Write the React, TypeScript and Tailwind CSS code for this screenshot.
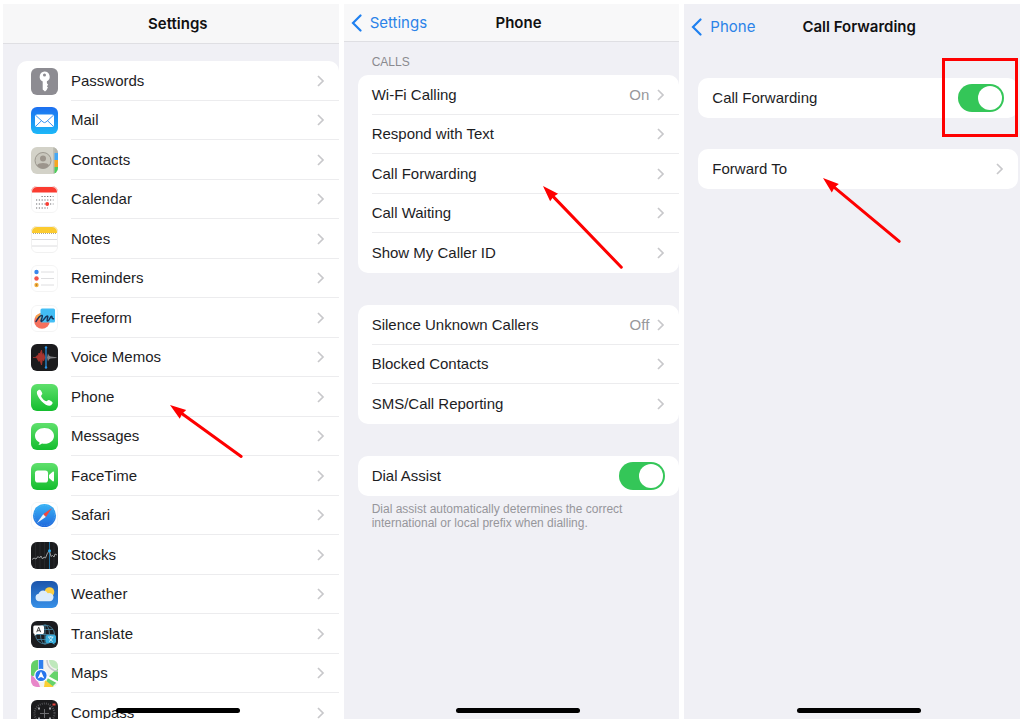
import { useId, useState } from "react";
import type { ReactNode } from "react";

// App icons, all drawn on a 27x27 grid

const Tile = ({ fill, stroke, children }: { fill: string; stroke?: string; children?: ReactNode }) => {
  const clip = useId();
  return (
    <svg viewBox="0 0 27 27" className="size-[27px] shrink-0" aria-hidden="true">
      <defs>
        <clipPath id={clip}>
          <rect width="27" height="27" rx="6" />
        </clipPath>
        <linearGradient id="green" x1="0" y1="0" x2="0" y2="1">
          <stop offset="0" stopColor="#5fe06c" />
          <stop offset="1" stopColor="#14bd2e" />
        </linearGradient>
        <linearGradient id="mail" x1="0" y1="0" x2="0" y2="1">
          <stop offset="0" stopColor="#1d6ff0" />
          <stop offset="1" stopColor="#1cb8f8" />
        </linearGradient>
        <linearGradient id="sky" x1="0" y1="0" x2="0" y2="1">
          <stop offset="0" stopColor="#1c55ab" />
          <stop offset="1" stopColor="#3790e8" />
        </linearGradient>
        <linearGradient id="safari" x1="0" y1="0" x2="0" y2="1">
          <stop offset="0" stopColor="#38b4f6" />
          <stop offset="1" stopColor="#2068dc" />
        </linearGradient>
      </defs>
      <g clipPath={`url(#${clip})`}>
        <rect width="27" height="27" fill={fill} />
        {children}
      </g>
      {stroke && <rect x="0.5" y="0.5" width="26" height="26" rx="5.5" fill="none" stroke={stroke} />}
    </svg>
  );
};

const PasswordsIcon = () => (
  <Tile fill="#8d8c92">
    <path
      fillRule="evenodd"
      fill="#fff"
      d="M13.5 3.5a5.2 5.2 0 0 1 2.4 9.8v2l1.2 1.400-1.200 1.600 1.100 1.400-1.100 1.300v.7l-1.900 1.700-2.300-1.800v-8.200a5.200 5.200 0 0 1 1.800-9.900Zm0 1.900a1.500 1.500 0 1 0 0 3 1.500 1.500 0 0 0 0-3Z"
    />
  </Tile>
);

const MailIcon = () => (
  <Tile fill="url(#mail)">
    <rect x="4" y="7.5" width="19" height="12.5" rx="2" fill="#fff" />
    <path d="M4.6 8.3 12 15q1.5 1.2 3 0l7.4-6.7M4.6 19.4l6-5.8M22.4 19.4l-6-5.8" fill="none" stroke="#3d95f2" />
  </Tile>
);

const ContactsIcon = () => (
  <Tile fill="#d3d2c8">
    <rect x="22.5" width="1" height="27" fill="#aaa99f" />
    <rect x="23.5" width="4" height="6" fill="#b4b3aa" />
    <rect x="23.5" y="6" width="4" height="7" fill="#45a8f5" />
    <rect x="23.5" y="13" width="4" height="7" fill="#f5a623" />
    <rect x="23.5" y="20" width="4" height="7" fill="#4cce5b" />
    <circle cx="12" cy="13.5" r="8" fill="#c9c7bd" stroke="#9c988f" />
    <circle cx="12" cy="11.5" r="3" fill="#9c958c" />
    <path d="M6 18.5c1.4-3.2 10.6-3.2 12 0-2.8 3.8-9.2 3.8-12 0Z" fill="#9c958c" />
  </Tile>
);

const CalendarIcon = () => (
  <Tile fill="#fff" stroke="#f4f4f4">
    <rect width="27" height="6.5" fill="#fb3b30" />
    <path
      d="M10.5 10.5h12M5 14h17.500M5 18h17.500M5 22h12"
      stroke="#6a6a6e"
      strokeWidth="1.2"
      strokeDasharray="1.2 1.6"
    />
    <circle cx="16.2" cy="18" r="1.9" fill="#fa3c32" />
  </Tile>
);

const NotesIcon = () => (
  <Tile fill="#fff" stroke="#f1f1f1">
    <rect width="27" height="7" fill="#fccb2f" />
    <path d="M0 7.500h27" stroke="#a9a595" strokeDasharray="1 1" />
    <path d="M0 13.500h27M0 20h27" stroke="#dcdcde" />
  </Tile>
);

const RemindersIcon = () => (
  <Tile fill="#fff" stroke="#f4f4f4">
    <path d="M10 7h13M10 13.500h13M10 20h13" stroke="#dedee0" />
    <circle cx="5.5" cy="7" r="2.2" fill="#3987ed" />
    <circle cx="5.5" cy="13.5" r="2.2" fill="#f3544c" />
    <circle cx="5.5" cy="20" r="2.2" fill="#f3b140" />
    <circle cx="5.5" cy="20" r="0.8" fill="#a76516" />
  </Tile>
);

const FreeformIcon = () => (
  <Tile fill="#fff" stroke="#f4f4f4">
    <circle cx="11" cy="16" r="7.8" fill="#f5705d" />
    <path d="M4 12.5c2-4 7-5.5 10.5-3.5L11 16Z" fill="#f6a14b" />
    <rect x="9.5" y="3.5" width="14.5" height="14" rx="1.5" fill="#42bef5" />
    <path
      d="M5 16.500c2-3.500 4.500-6.500 6-6 1.500.8-2 5.500-.6 6 1.500.5 4-5.500 5.800-5.500 1.800 0-1.200 4.500.3 5 1.800.4 2.500-4.500 4-4.800 1.200 0-.3 3 2 2.600"
      fill="none"
      stroke="#18345a"
      strokeWidth="1.5"
      strokeLinecap="round"
    />
  </Tile>
);

const VoiceMemosIcon = () => (
  <Tile fill="#1b1b1d">
    <path d="M2 13.500h12l-1.500-4-1 2-1-5.500-1.500 4-1-1-1 2.500-2 1 2 3.500 1 1.500 1-1.500 1.500 5 1-6 1 2 1.500-3.500" fill="#a8352f" stroke="#a8352f" strokeWidth="0.8" />
    <path d="M16 13.500 17 9.500l1 2 1.500 1 6 .8v.6l-6 .7-1.500 1-1 2Z" fill="#808084" />
    <path d="M15 3.500v20" stroke="#2a96e8" strokeWidth="1.2" />
    <circle cx="15" cy="3.5" r="1.2" fill="#2a96e8" />
    <circle cx="15" cy="23.5" r="1.2" fill="#2a96e8" />
  </Tile>
);

const PhoneIcon = () => (
  <Tile fill="url(#green)">
    <path
      d="M6.300 7.100c.9-1.300 2.200-2 3-1 .9 1.100 1.800 2.400 2 3.300.2 1-1.300 1.600-1.200 2.600.3 1.700 3.300 4.900 5.200 5.300 1 .1 1.600-1.400 2.600-1.200.9.200 2.300 1.100 3.300 2 1 .9.2 2.200-1.100 3.100-2 1.400-5.800-.3-9.300-3.800S4.900 9.100 6.300 7.100Z"
      fill="#fff"
    />
  </Tile>
);

const MessagesIcon = () => (
  <Tile fill="url(#green)">
    <path
      d="M13.500 5c5.500 0 9.500 3.500 9.500 7.900s-4 7.900-9.500 7.900c-.9 0-1.700-.1-2.500-.3-.9.8-2.200 1.400-3.700 1.500.8-.7 1.200-1.600 1.300-2.600C5.700 18 4 15.700 4 12.900 4 8.500 8 5 13.500 5Z"
      fill="#fff"
    />
  </Tile>
);

const FaceTimeIcon = () => (
  <Tile fill="url(#green)">
    <rect x="4" y="7.500" width="13" height="12" rx="2.800" fill="#fff" />
    <path d="m18 12 3.700-3.200c.6-.5 1.300-.2 1.300.6v8.200c0 .8-.7 1.100-1.300.6L18 15Z" fill="#fff" />
  </Tile>
);

const SafariIcon = () => (
  <Tile fill="#fff" stroke="#f6f6f6">
    <circle cx="13.5" cy="13.5" r="11.5" fill="url(#safari)" />
    <circle cx="13.5" cy="13.5" r="10" fill="none" stroke="#7fc0f5" strokeWidth="0.6" strokeDasharray="0.5 1.2" />
    <path d="m21 6-6.200 9-2.600-2.700Z" fill="#f4473c" />
    <path d="m6 21 6.200-8.700 2.600 2.700Z" fill="#f1f4f8" />
  </Tile>
);

const StocksIcon = () => (
  <Tile fill="#1a1b1d">
    <path d="M4.500 0v27M9 0v27M13.500 0v27M23 0v27" stroke="#313236" strokeWidth="0.6" />
    <path d="M18.500 0v27" stroke="#1f6d9c" />
    <path
      d="m1 17.500 2-1.500 2 1 2-2.500 1.500 1.500L10 14l1.500 3 1.500-2 1.500 1 2-5 2-2 1.500 5.500 1.500-1L23 15l1-3 2 1"
      fill="none"
      stroke="#a9abae"
      strokeWidth="0.9"
    />
    <circle cx="18.5" cy="8.7" r="1.5" fill="#2cabf0" />
  </Tile>
);

const WeatherIcon = () => (
  <Tile fill="url(#sky)">
    <circle cx="18.5" cy="11" r="4.8" fill="#fbcf45" />
    <path d="M8 20.300a3.800 3.800 0 0 1-.4-7.500 5 5 0 0 1 9.200-.6 4.200 4.200 0 1 1 1.700 8.100Z" fill="#dcecfb" />
  </Tile>
);

const TranslateIcon = () => (
  <Tile fill="#1b1c1f">
    <g fill="none" stroke="#47819c" strokeWidth="0.9">
      <circle cx="14" cy="13.5" r="9.5" />
      <ellipse cx="14" cy="13.5" rx="4.5" ry="9.5" />
      <path d="M4.500 13.500h19M6 8.500h16M6 18.500h16M14 4v19" />
    </g>
    <path
      d="M4 4.500h7.500A1.500 1.500 0 0 1 13 6v5.500a1.500 1.500 0 0 1-1.500 1.500H6l-2.500 1.800V13a1.500 1.500 0 0 1-1.200-1.500V6A1.500 1.500 0 0 1 4 4.500Z"
      fill="#fff"
    />
    <path d="m5.700 11.200 2-5 2 5M6.400 9.700H9" fill="none" stroke="#333" strokeWidth="0.9" />
    <path
      d="M16 14h7.500a1.500 1.500 0 0 1 1.500 1.500v5a1.500 1.500 0 0 1-1.500 1.500v1.800L21 22h-5a1.500 1.500 0 0 1-1.500-1.500v-5A1.500 1.500 0 0 1 16 14Z"
      fill="#35a9d8"
    />
    <path
      d="M17 16h5.500M19.700 15v1M18 20.500c2-1 3-2.500 3.500-4.500M18 16.500c.5 1.500 2 3 3.800 4"
      fill="none"
      stroke="#e8f6fc"
      strokeWidth="0.8"
    />
  </Tile>
);

const MapsIcon = () => (
  <Tile fill="#f2f3ee">
    <path d="M0 0h7v14L0 17Z" fill="#63d067" />
    <path d="M14 27C15 18 21 12 27 9v12l-6 6Z" fill="#66d36b" />
    <path d="M18 0c0 5 4 9 9 9V0Z" fill="#bfe8bc" />
    <path d="M16 0c0 6.500 5 11 11 11" fill="none" stroke="#c7c9cc" strokeWidth="1.5" />
    <path d="M0 15c5 3 8 7 9 12H0Z" fill="#e886c9" />
    <path d="m14 20 9 7H13Z" fill="#fbcf33" />
    <path d="M27 22.500 15 16" stroke="#fff" strokeWidth="2" />
    <path d="M10 0v11" stroke="#2e7fee" strokeWidth="4.5" />
    <circle cx="10" cy="15.5" r="6.2" fill="#2675ec" stroke="#fff" strokeWidth="1.2" />
    <path d="m10 11.300 3.300 7.200L10 17l-3.300 1.500Z" fill="#fff" />
  </Tile>
);

const CompassIcon = () => (
  <Tile fill="#1b1b1d">
    <circle cx="13.5" cy="13.5" r="10" fill="none" stroke="#66666a" strokeWidth="2" strokeDasharray="0.7 1.4" />
    <path d="M13.500 9v9M9 13.500h9" stroke="#77777b" strokeWidth="0.9" />
    <path d="M8 7.500v2M19 7.500v2M8 17.500v2M19 17.500v2" stroke="#d9d9dc" strokeWidth="1.5" />
    <path d="M21.500 4.500h3" stroke="#e8443c" strokeWidth="2" />
  </Tile>
);

const apps = [
  { name: "Passwords", icon: <PasswordsIcon /> },
  { name: "Mail", icon: <MailIcon /> },
  { name: "Contacts", icon: <ContactsIcon /> },
  { name: "Calendar", icon: <CalendarIcon /> },
  { name: "Notes", icon: <NotesIcon /> },
  { name: "Reminders", icon: <RemindersIcon /> },
  { name: "Freeform", icon: <FreeformIcon /> },
  { name: "Voice Memos", icon: <VoiceMemosIcon /> },
  { name: "Phone", icon: <PhoneIcon /> },
  { name: "Messages", icon: <MessagesIcon /> },
  { name: "FaceTime", icon: <FaceTimeIcon /> },
  { name: "Safari", icon: <SafariIcon /> },
  { name: "Stocks", icon: <StocksIcon /> },
  { name: "Weather", icon: <WeatherIcon /> },
  { name: "Translate", icon: <TranslateIcon /> },
  { name: "Maps", icon: <MapsIcon /> },
  { name: "Compass", icon: <CompassIcon /> },
];

const Chevron = () => (
  <svg viewBox="0 0 8 14" className="h-[14px] w-2 shrink-0" aria-hidden="true">
    <path d="m1 2 5 5-5 5" fill="none" stroke="#c8c8cb" strokeWidth="1.7" />
  </svg>
);

const List = ({ children }: { children: ReactNode }) => (
  <ul className="overflow-hidden rounded-[10px] bg-white">{children}</ul>
);

const rowClass = "group flex odd:h-[40px] even:h-[39px] pl-[14px]";
const rowBody =
  "flex min-w-0 flex-1 items-center justify-between border-b border-[#ececee] pr-[14px] group-last:border-b-0";

const LinkRow = ({ label, value, icon }: { label: string; value?: string; icon?: ReactNode }) => (
  <li className={rowClass}>
    <a href="#" className="flex flex-1 items-center">
      {icon && <span className="mr-[13px]">{icon}</span>}
      <span className={`${rowBody} h-full`}>
        <span>{label}</span>
        <span className="flex items-center gap-2 text-[#98989c]">
          {value}
          <Chevron />
        </span>
      </span>
    </a>
  </li>
);

const SwitchRow = ({ label }: { label: string }) => {
  const [on, setOn] = useState(true);
  return (
    <li className={rowClass}>
      <label className={rowBody}>
        <span>{label}</span>
        <input
          type="checkbox"
          role="switch"
          checked={on}
          onChange={(e) => setOn(e.target.checked)}
          className="h-7 w-[46px] appearance-none rounded-full bg-[#e5e5ea] p-[2px] before:block before:size-6 before:rounded-full before:bg-white checked:bg-[#34c658] checked:before:ml-auto"
        />
      </label>
    </li>
  );
};

const Back = ({ label }: { label: string }) => (
  <a href="#" className="absolute left-[7px] flex items-center gap-2 font-['Inter','Liberation_Sans',sans-serif] text-[#2b83e8]">
    <svg viewBox="0 0 11 18" className="h-[18px] w-[11px]" aria-hidden="true">
      <path d="M9.500 1.500 2 9l7.500 7.500" fill="none" stroke="#1f80f0" strokeWidth="2.2" strokeLinecap="round" />
    </svg>
    {label}
  </a>
);

const HomeBar = () => (
  <div className="absolute inset-x-0 bottom-[6px] flex justify-center pl-[14px]">
    <div className="h-[5px] w-[124px] rounded-full bg-black" />
  </div>
);

// Points from its bottom right corner to its top left one
const Arrow = ({ width, height, className }: { width: number; height: number; className: string }) => {
  const angle = (Math.atan2(height, width) * 180) / Math.PI;
  const length = Math.hypot(width, height);
  return (
    <svg width={width} height={height} className={`absolute overflow-visible ${className}`} aria-hidden="true">
      <g transform={`rotate(${angle})`} fill="#fe0000" stroke="#fe0000">
        <path d={`M12 0H${length - 1}`} strokeWidth="3" strokeLinecap="round" />
        <path d="m0 0 16-5.500-1 5.500 1 5.500Z" stroke="none" />
      </g>
    </svg>
  );
};

const panel = "relative overflow-hidden bg-[#f0f0f5]";
const header = "relative flex items-center justify-center pl-[14px]";
const title = "font-['Inter','Liberation_Sans',sans-serif] font-semibold text-[#111112]";

export default function App() {
  return (
    <main className="grid h-screen grid-cols-3 gap-[5px] bg-white pt-1 pr-1 pb-[5px] pl-[3px] font-['Liberation_Sans',Arial,sans-serif] text-[15px] leading-5 text-[#1d1d1f]">
      <section className={panel}>
        <header className={`${header} h-10 border-b border-[#dfdfe3] bg-[#f7f7f8]`}>
          <h1 className={title}>Settings</h1>
        </header>
        <div className="pt-[17px] pl-[14px]">
          <List>
            {apps.map((app) => (
              <LinkRow key={app.name} label={app.name} icon={app.icon} />
            ))}
          </List>
        </div>
        <Arrow width={72} height={52} className="top-[401px] left-[167px]" />
        <HomeBar />
      </section>

      <section className={panel}>
        <header className={`${header} h-[38px] border-b border-[#dfdfe3] bg-[#f8f8f9]`}>
          <Back label="Settings" />
          <h1 className={title}>Phone</h1>
        </header>
        <div className="flex flex-col pl-[14px]">
          <h2 className="pt-3 pb-[5px] pl-[14px] text-xs text-[#8a8a8f]">CALLS</h2>
          <List>
            <LinkRow label="Wi-Fi Calling" value="On" />
            <LinkRow label="Respond with Text" />
            <LinkRow label="Call Forwarding" />
            <LinkRow label="Call Waiting" />
            <LinkRow label="Show My Caller ID" />
          </List>
          <div className="mt-8">
            <List>
              <LinkRow label="Silence Unknown Callers" value="Off" />
              <LinkRow label="Blocked Contacts" />
              <LinkRow label="SMS/Call Reporting" />
            </List>
          </div>
          <div className="mt-8">
            <List>
              <SwitchRow label="Dial Assist" />
            </List>
          </div>
          <p className="pt-[6px] pr-8 pl-[14px] text-xs leading-[14px] text-[#96969b]">
            Dial assist automatically determines the correct international or local prefix when dialling.
          </p>
        </div>
        <Arrow width={79} height={82} className="top-[182px] left-[199px]" />
        <HomeBar />
      </section>

      <section className={panel}>
        <header className={`${header} h-[46px]`}>
          <Back label="Phone" />
          <h1 className={title}>Call Forwarding</h1>
        </header>
        <div className="flex flex-col gap-[31px] pt-7 pr-[2px] pl-[14px]">
          <div className="relative">
            <List>
              <SwitchRow label="Call Forwarding" />
            </List>
            <div className="absolute -top-5 right-0 h-[79px] w-[76px] border-3 border-[#fe0000]" />
          </div>
          <List>
            <LinkRow label="Forward To" />
          </List>
        </div>
        <Arrow width={77} height={64} className="top-[174px] left-[139px]" />
        <HomeBar />
      </section>
    </main>
  );
}
